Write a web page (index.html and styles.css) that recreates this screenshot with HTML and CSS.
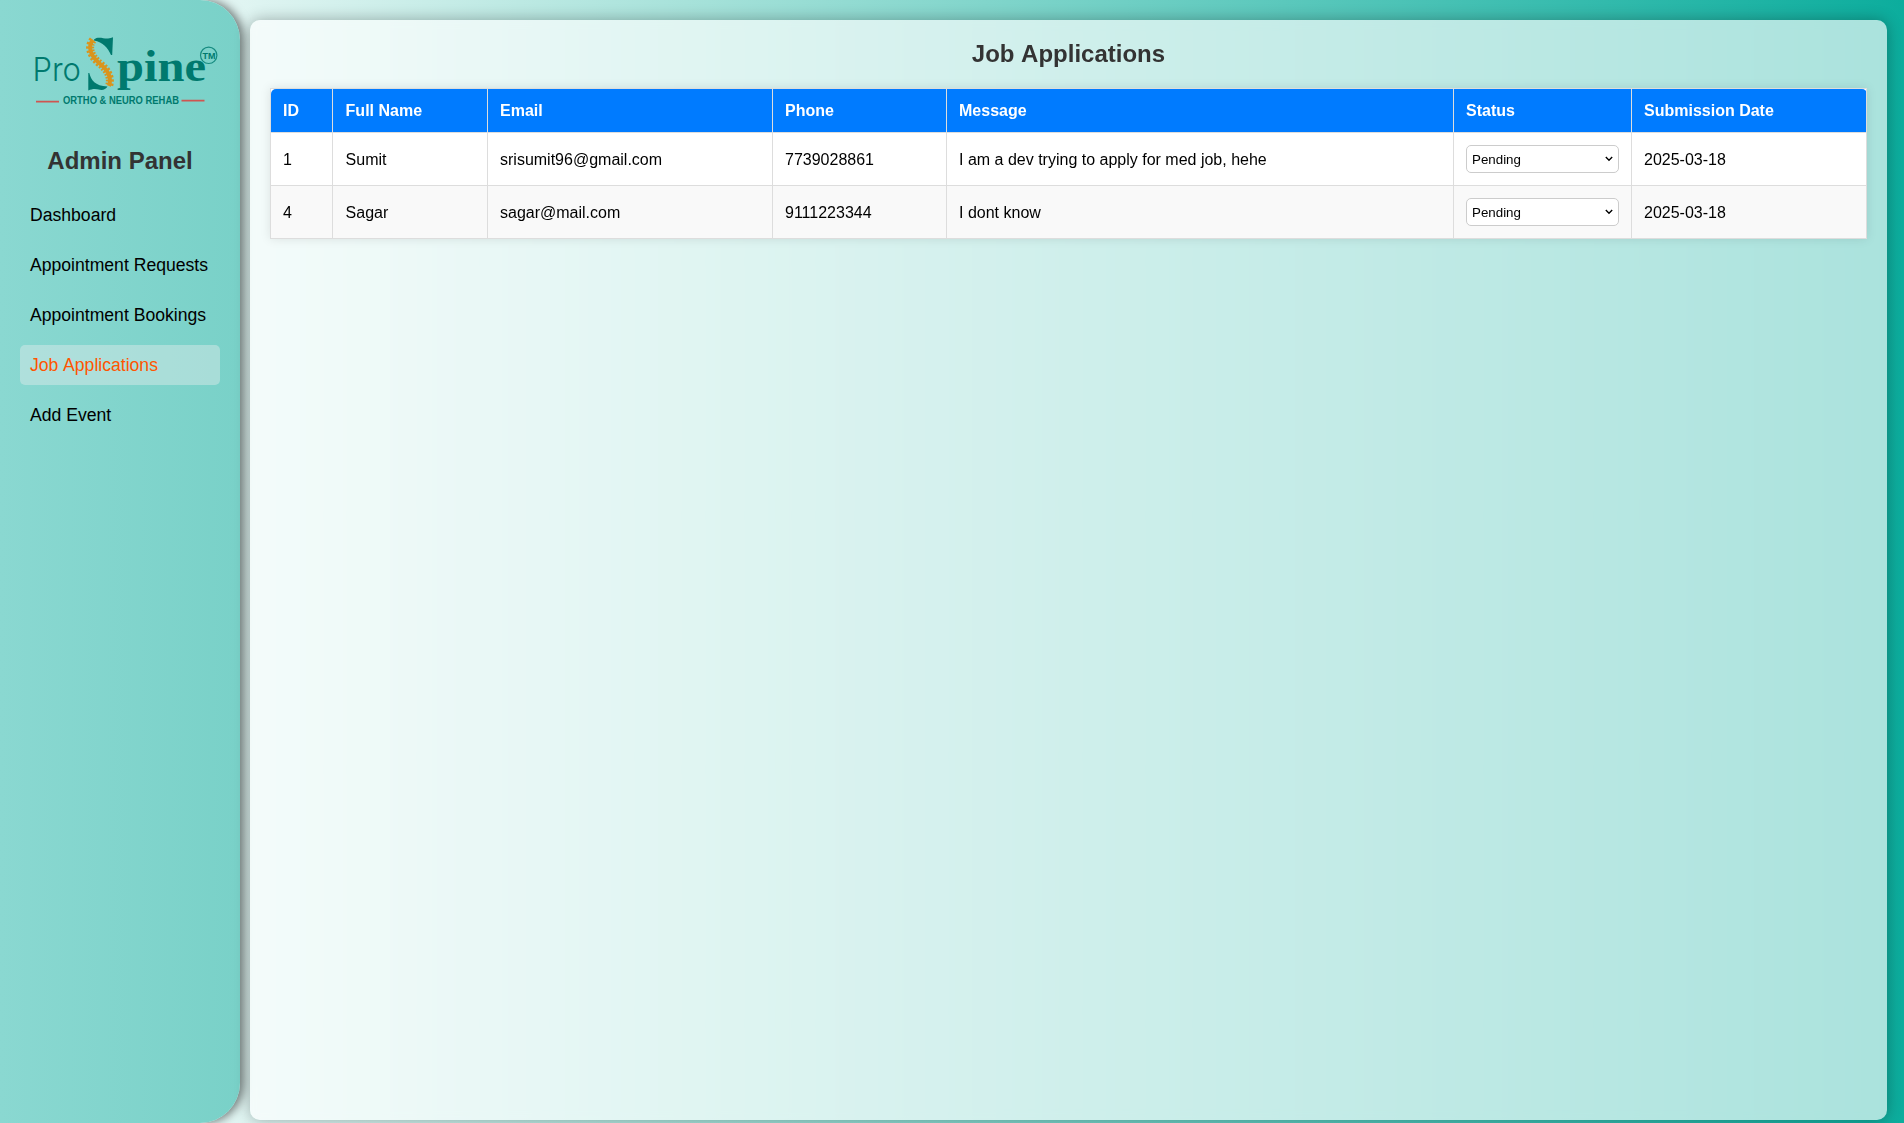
FILE: index.html
```html
<!DOCTYPE html>
<html lang="en">
<head>
<meta charset="utf-8">
<title>Job Applications</title>
<link rel="stylesheet" href="styles.css">
</head>
<body>
<aside class="sidebar">
  <svg class="logo" width="200" height="100" viewBox="0 0 200 100" role="img" aria-label="Pro Spine">
    <g fill="#00796e">
      <text class="logo-pro" x="12.500" y="61" textLength="48.500" lengthAdjust="spacingAndGlyphs">Pro</text>
      <text class="logo-pine" x="97" y="61" textLength="89" lengthAdjust="spacingAndGlyphs">pine</text>
      <path d="M74 19.500C78 16 84 19 88 18.500Q91 18.300 93 17.300L92.200 35H91C88 28 83 22 74 20.500Z"/>
      <path d="M68.300 53H69.300C71 60 75 66 87.500 66.500Q85 70.500 80 69.800C75 68.500 72 69 68.300 70.500Z"/>
      <text class="logo-tag" x="43" y="84" textLength="116" lengthAdjust="spacingAndGlyphs">ORTHO &amp; NEURO REHAB</text>
      <text class="logo-tm" x="182.500" y="38.500" textLength="13" lengthAdjust="spacingAndGlyphs">TM</text>
    </g>
    <circle cx="188.700" cy="35.300" r="8.200" fill="none" stroke="#168b80" stroke-width="1.200"/>
    <g fill="none" stroke="#d9941d">
      <path d="M73 20C67 27 71 36 79 43C87 49 92 57 89 66" stroke-width="4"/>
      <path d="M73 20C67 27 71 36 79 43C87 49 92 57 89 66" stroke-width="8" stroke-dasharray="2 1.600"/>
    </g>
    <path d="M16 81.700H39M161.500 80.700H184.500" stroke="#cf5551" stroke-width="1.700"/>
  </svg>
  <h2 class="brand">Admin Panel</h2>
  <nav class="menu">
    <a class="link">Dashboard</a>
    <a class="link">Appointment Requests</a>
    <a class="link">Appointment Bookings</a>
    <a class="link active">Job Applications</a>
    <a class="link">Add Event</a>
  </nav>
</aside>
<main class="content">
  <h2 class="title">Job Applications</h2>
  <table class="table">
    <colgroup><col class="c-id"><col class="c-name"><col class="c-email"><col class="c-phone"><col class="c-message"><col class="c-status"><col class="c-date"></colgroup>
    <thead><tr><th>ID</th><th class="cell-name">Full Name</th><th>Email</th><th>Phone</th><th>Message</th><th>Status</th><th>Submission Date</th></tr></thead>
    <tbody>
      <tr><td>1</td><td class="cell-name">Sumit</td><td>srisumit96@gmail.com</td><td>7739028861</td><td>I am a dev trying to apply for med job, hehe</td><td class="cell-status"><select class="status"><option>Pending</option></select></td><td>2025-03-18</td></tr>
      <tr><td>4</td><td class="cell-name">Sagar</td><td>sagar@mail.com</td><td>9111223344</td><td>I dont know</td><td class="cell-status"><select class="status"><option>Pending</option></select></td><td>2025-03-18</td></tr>
    </tbody>
  </table>
</main>
</body>
</html>
```
FILE: styles.css
```css
* { box-sizing: border-box; }
body {
  margin: 0;
  height: 1123px;
  display: flex;
  overflow: hidden;
  font-family: "Liberation Sans", Arial, sans-serif;
  background: linear-gradient(90deg, #fff, #a7e2da 36%, #0cad9d);
}
.sidebar {
  width: 240px;
  height: 1123px;
  padding: 20px;
  border-radius: 0 40px 40px 0;
  background: linear-gradient(90deg, #8ad8d1, #79d1c8);
  box-shadow: 4px 0 10px rgba(0, 0, 0, .5);
}
.logo { display: block; }
.logo-pro { font: 300 33px Inter, sans-serif; }
.logo-pine { font: bold 45px "Liberation Serif", serif; }
.logo-tag { font: bold 10.5px "Liberation Sans", sans-serif; }
.logo-tm { font: bold 9px "Liberation Sans", sans-serif; }
.brand {
  margin: 27px 0 21px;
  font-size: 24px;
  line-height: 27px;
  text-align: center;
  color: #333;
}
.menu { display: flex; flex-direction: column; gap: 10px; }
.link {
  height: 40px;
  padding: 10px;
  border-radius: 5px;
  font-size: 17.6px;
  line-height: 20px;
  white-space: nowrap;
  color: #000;
}
.link.active { color: #ff5500; background: rgba(225, 236, 234, .45); word-spacing: .8px; }
.content {
  width: 1637px;
  height: 1100px;
  margin: 20px 0 0 10px;
  padding: 20px;
  border-radius: 10px;
  background: rgba(255, 255, 255, .65);
  backdrop-filter: blur(5px);
  box-shadow: 0 0 15px rgba(0, 0, 0, .3);
}
.title {
  margin: 0 0 20px;
  font-size: 24px;
  line-height: 28px;
  text-align: center;
  word-spacing: .8px;
  color: #333;
}
.table {
  width: 1597px;
  table-layout: fixed;
  border-collapse: collapse;
  background: #fff;
  box-shadow: 0 0 10px rgba(0, 0, 0, .1);
}
.c-id { width: 62px; }
.c-name { width: 155px; }
.c-email { width: 285px; }
.c-phone { width: 174px; }
.c-message { width: 507px; }
.c-status { width: 178px; }
th, td { padding: 12px; border: 1px solid #ddd; text-align: left; font-size: 16px; }
th { height: 44px; background: #007bff; color: #fff; }
th:first-child { border-top-left-radius: 5px; }
th:last-child { border-top-right-radius: 5px; }
td { height: 53px; padding: 13px 12px 11px; }
.cell-name { padding-left: 12.6px; }
.cell-status { padding: 12px; }
tbody tr:nth-child(even) { background: #f9f9f9; }
.status {
  display: block;
  width: 153px;
  height: 28px;
  padding: 0 5px;
  appearance: none;
  border: 1px solid #ccc;
  border-radius: 5px;
  background: #fff url("data:image/svg+xml,%3Csvg xmlns='http://www.w3.org/2000/svg' width='8' height='6'%3E%3Cpath d='M.8 1 4 4.300 7.200 1' fill='none' stroke='%23000' stroke-width='1.350'/%3E%3C/svg%3E") no-repeat right 5px center;
  color: #000;
  font: 13.333px "Liberation Sans", Arial, sans-serif;
}
```
